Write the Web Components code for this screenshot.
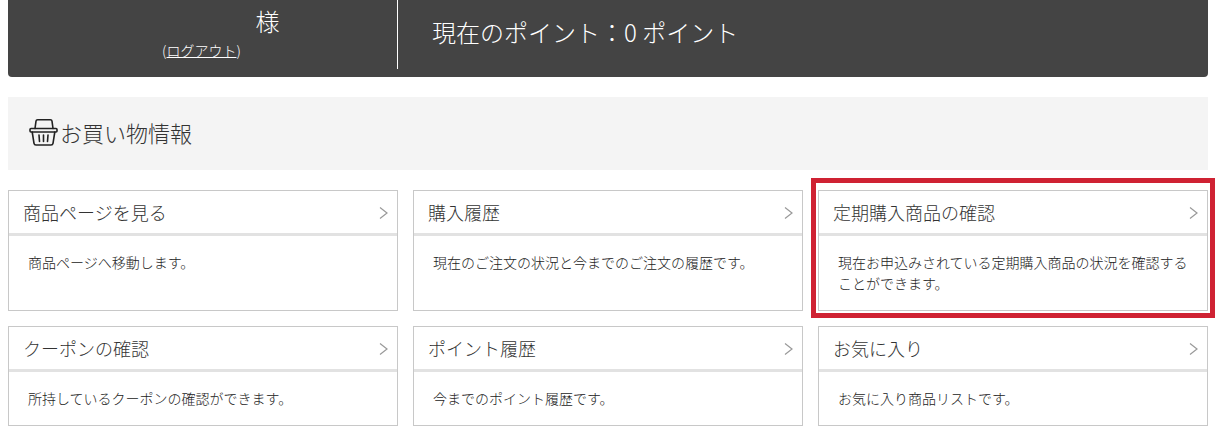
<!DOCTYPE html>
<html lang="ja">
<head>
<meta charset="utf-8">
<title>マイページ</title>
<style>
html,body{margin:0;padding:0;background:#fff;overflow:hidden}
body{font-family:"Noto Sans CJK JP","Noto Sans",sans-serif;color:#333}
my-page{display:block;padding:0 7px 0 8px}
</style>
</head>
<body>
<my-page>
  <account-bar points="0"></account-bar>
  <section-title>お買い物情報</section-title>
  <card-grid>
    <menu-card heading="商品ページを見る" tall>商品ページへ移動します。</menu-card>
    <menu-card heading="購入履歴" tall>現在のご注文の状況と今までのご注文の履歴です。</menu-card>
    <menu-card heading="定期購入商品の確認" tall highlighted>現在お申込みされている定期購入商品の状況を確認することができます。</menu-card>
    <menu-card heading="クーポンの確認">所持しているクーポンの確認ができます。</menu-card>
    <menu-card heading="ポイント履歴">今までのポイント履歴です。</menu-card>
    <menu-card heading="お気に入り">お気に入り商品リストです。</menu-card>
  </card-grid>
</my-page>
<script>
class MyPage extends HTMLElement{
  constructor(){super();this.attachShadow({mode:'open'}).innerHTML='<style>:host{display:block}</style><slot></slot>';}
}
class AccountBar extends HTMLElement{
  constructor(){
    super();
    const p=this.getAttribute('points')||'0';
    this.attachShadow({mode:'open'}).innerHTML=`<style>
      :host{display:flex;height:77px;background:#444;color:#fff;border-radius:0 0 4px 4px;box-sizing:border-box;padding-bottom:8px}
      .user{width:390px;box-sizing:border-box;border-right:1px solid #fff;display:flex;flex-direction:column;align-items:center;padding-top:4px}
      .name{font-size:24px;line-height:33px;font-weight:300;width:100%;box-sizing:border-box;text-align:center;padding-left:130px}
      .out{font-size:14px;line-height:20px;margin-top:3px;margin-right:2px;font-weight:300}
      a{color:inherit;text-decoration:underline}
      .pts{font-size:24px;line-height:33px;font-weight:300;padding:15px 0 0 34px;white-space:pre}
    </style>
    <div class="user"><div class="name">様</div><div class="out">(<a href="#">ログアウト</a>)</div></div>
    <div class="pts">現在のポイント：${p} ポイント</div>`;
  }
}
class SectionTitle extends HTMLElement{
  constructor(){
    super();
    this.attachShadow({mode:'open'}).innerHTML=`<style>
      :host{display:flex;align-items:center;height:73px;margin-top:20px;background:#f4f4f4;padding-left:21px;font-size:22px;font-weight:300;color:#333}
      svg{width:29px;height:28px;flex:none;margin-right:3px;display:block;margin-top:-3px}
      span{margin-top:-4px;margin-left:-1px}
    </style>
    <svg viewBox="0 0 29 28" fill="none" stroke="#222" stroke-width="1.6" stroke-linejoin="round" stroke-linecap="round">
      <path d="M6 10.500L7 3.200Q7.200 1.800 8.600 1.800H21.400Q22.800 1.800 23 3.200L24 10.500"/>
      <rect x="1" y="10.500" width="27" height="3.500" rx="1"/>
      <path d="M3.200 14L5 25.300Q5.300 27 7 27H22Q23.700 27 24 25.300L25.800 14"/>
      <path d="M10 17L10.500 23.500M14.500 17V23.500M19 17L18.500 23.500"/>
    </svg><span><slot></slot></span>`;
  }
}
class CardGrid extends HTMLElement{
  constructor(){
    super();
    this.attachShadow({mode:'open'}).innerHTML=`<style>
      :host{display:grid;grid-template-columns:repeat(3,390px);column-gap:15px;row-gap:15px;margin-top:20px}
    </style><slot></slot>`;
  }
}
class MenuCard extends HTMLElement{
  constructor(){
    super();
    const h=this.getAttribute('heading')||'';
    this.attachShadow({mode:'open'}).innerHTML=`<style>
      :host{display:block;position:relative;box-sizing:border-box;height:100px;border:1px solid #c8c8c8;background:#fff}
      :host([tall]){height:121px}
      .head{display:flex;justify-content:space-between;align-items:center;box-sizing:border-box;height:45px;border-bottom:3px solid #e2e2e2;padding:0 9px 0 14px;font-size:18px;font-weight:300;color:#333}
      svg{width:9px;height:14px;display:block;margin-top:1px}
      .body{padding:16px 14px 0 19px;font-size:14px;line-height:21px;color:#222;font-weight:300}
      .mark{display:none;position:absolute;left:-8px;top:-13px;right:-8px;bottom:-8px;border:5px solid #cf2233;pointer-events:none}
      :host([highlighted]) .mark{display:block}
    </style>
    <div class="head"><span>${h}</span><svg viewBox="0 0 9 14" fill="none" stroke="#999" stroke-width="1.2"><path d="M1 1.500L8 7L1 12.500"/></svg></div>
    <div class="body"><slot></slot></div>
    <div class="mark"></div>`;
  }
}
customElements.define('my-page',MyPage);
customElements.define('account-bar',AccountBar);
customElements.define('section-title',SectionTitle);
customElements.define('card-grid',CardGrid);
customElements.define('menu-card',MenuCard);
</script>
</body>
</html>
